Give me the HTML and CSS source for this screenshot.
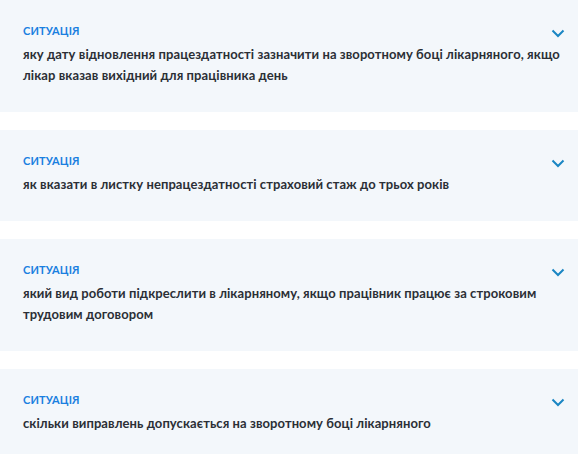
FILE: index.html
```html
<!DOCTYPE html>
<html lang="uk">
<head>
<meta charset="utf-8">
<link rel="stylesheet" href="styles.css">
</head>
<body>
<div class="list">
  <div class="card">
    <div class="head">
      <div class="label">Ситуація</div>
      <svg class="chev" width="14" height="9" viewBox="0 0 14 9"><path d="M1.5 1.5 L7 7 L12.5 1.5" fill="none" stroke="#1a86c3" stroke-width="2"/></svg>
    </div>
    <div class="text">яку дату відновлення працездатності зазначити на зворотному боці лікарняного, якщо лікар вказав вихідний для працівника день</div>
  </div>
  <div class="card">
    <div class="head">
      <div class="label">Ситуація</div>
      <svg class="chev" width="14" height="9" viewBox="0 0 14 9"><path d="M1.5 1.5 L7 7 L12.5 1.5" fill="none" stroke="#1a86c3" stroke-width="2"/></svg>
    </div>
    <div class="text">як вказати в листку непрацездатності страховий стаж до трьох років</div>
  </div>
  <div class="card">
    <div class="head">
      <div class="label">Ситуація</div>
      <svg class="chev" width="14" height="9" viewBox="0 0 14 9"><path d="M1.5 1.5 L7 7 L12.5 1.5" fill="none" stroke="#1a86c3" stroke-width="2"/></svg>
    </div>
    <div class="text">який вид роботи підкреслити в лікарняному, якщо працівник працює за строковим трудовим договором</div>
  </div>
  <div class="card">
    <div class="head">
      <div class="label">Ситуація</div>
      <svg class="chev" width="14" height="9" viewBox="0 0 14 9"><path d="M1.5 1.5 L7 7 L12.5 1.5" fill="none" stroke="#1a86c3" stroke-width="2"/></svg>
    </div>
    <div class="text">скільки виправлень допускається на зворотному боці лікарняного</div>
  </div>
</div>
</body>
</html>
```
FILE: styles.css
```css
html, body {
  margin: 0;
  padding: 0;
  background: #ffffff;
}
body {
  font-family: "Lato", "Open Sans", sans-serif;
}
.list {
  display: flex;
  flex-direction: column;
  gap: 18px;
  width: 578px;
}
.card {
  background: #f3f7fb;
  padding: 23px 13px 26px 23px;
}
.head {
  display: flex;
  justify-content: space-between;
  align-items: center;
  height: 16px;
  margin-bottom: 5px;
}
.label {
  font-size: 11px;
  line-height: 16px;
  font-weight: 700;
  text-transform: uppercase;
  color: #1a7fe0;
  letter-spacing: 0.1px;
}
.chev {
  display: block;
  margin-top: 4px;
}
.text {
  font-size: 13px;
  line-height: 21px;
  font-weight: 700;
  color: #2b2f36;
  letter-spacing: 0.08px;
}
```
